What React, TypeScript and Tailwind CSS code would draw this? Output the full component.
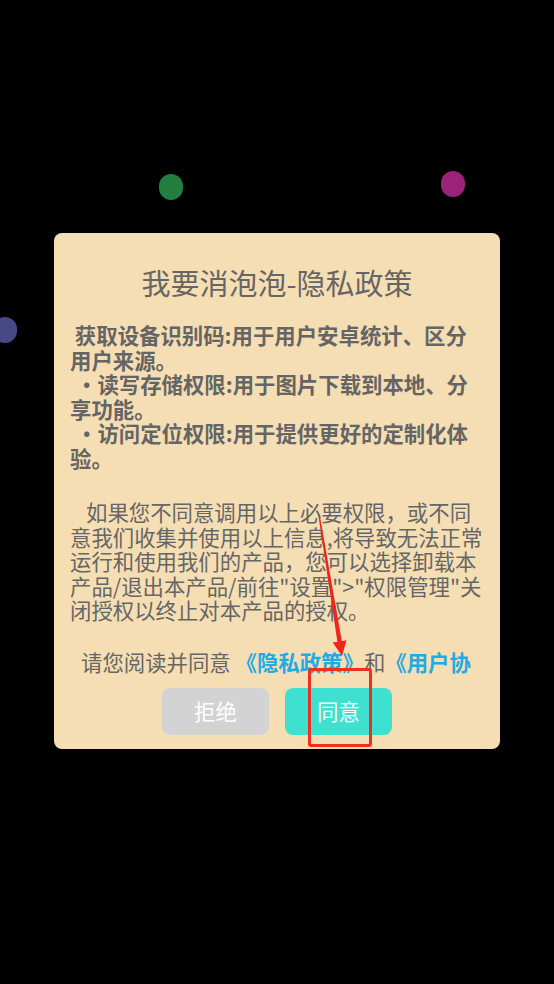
import React from "react";

const font = { fontFamily: '"Noto Sans CJK SC", "Noto Sans", sans-serif' };

function Bullet() {
  return <span className="inline-block w-[27.4px] pl-[6px] text-left">·</span>;
}

export default function App() {
  return (
    <div
      className="relative min-h-[984px] w-full overflow-hidden bg-black pt-[233px]"
      style={font}
    >
      {/* decorative bubbles */}
      <div className="absolute left-[159px] top-[174px] h-[26px] w-[24px] rounded-full bg-[#237f3f]" />
      <div className="absolute left-[441px] top-[171px] h-[26px] w-[24px] rounded-full bg-[#9c2179]" />
      <div className="absolute left-[-7px] top-[317px] h-[26px] w-[24px] rounded-full bg-[#484887]" />

      <div className="mx-[54px] flex w-[446px] flex-col rounded-[8px] bg-[#f5deb3] px-[16px] pb-[14px] pt-[31px]">
        <h1 className="text-center text-[29px] font-normal leading-[36px] text-[#666666]">
          我要消泡泡-隐私政策
        </h1>

        <div className="mt-[23px] w-[415px] whitespace-pre-wrap text-[21.4px] font-bold leading-[24.5px] text-[#656565]">
          {" 获取设备识别码:用于用户安卓统计、区分用户来源。"}
          <br />
          <Bullet />
          读写存储权限:用于图片下载到本地、分享功能。
          <br />
          <Bullet />
          访问定位权限:用于提供更好的定制化体验。
        </div>

        <div className="mt-[30px] w-[415px] text-[21.4px] font-normal leading-[24.5px] text-[#666666]">
          <span className="inline-block w-[16px]" />
          如果您不同意调用以上必要权限，或不同意我们收集并使用以上信息,将导致无法正常运行和使用我们的产品，您可以选择卸载本产品/退出本产品/前往"设置"&gt;"权限管理"关闭授权以终止对本产品的授权。
        </div>

        <div className="ml-[11px] mt-[27px] w-[391px] overflow-hidden whitespace-nowrap text-[21.4px] leading-[24.5px] text-[#666666]">
          请您阅读并同意{" "}
          <span className="font-bold text-[#1fabe3] underline decoration-[1.5px] underline-offset-[4px]">
            《隐私政策》
          </span>
          和
          <span className="font-bold text-[#1fabe3] underline decoration-[1.5px] underline-offset-[4px]">
            《用户协议》
          </span>
        </div>

        <div className="mt-[14px] flex justify-center gap-[16px]">
          <button className="h-[47px] w-[107px] rounded-[8px] bg-[#d3d3d3] text-[21.4px] text-white">
            拒绝
          </button>
          <button className="h-[47px] w-[107px] rounded-[8px] bg-[#40e0d0] text-[21.4px] text-white">
            同意
          </button>
        </div>
      </div>

      {/* red annotation: arrow + box */}
      <svg
        className="pointer-events-none absolute left-0 top-0"
        width="554"
        height="984"
        viewBox="0 0 554 984"
      >
        <polygon
          points="318.3,515.1 319.7,514.9 341.8,640.9 346.5,640.2 342,656 332.7,642.4 337.4,641.7"
          fill="#f0261a"
        />
      </svg>
      <div className="pointer-events-none absolute left-[308px] top-[668px] h-[79px] w-[64px] rounded-[3px] border-[3px] border-[#f0301e]" />
    </div>
  );
}
